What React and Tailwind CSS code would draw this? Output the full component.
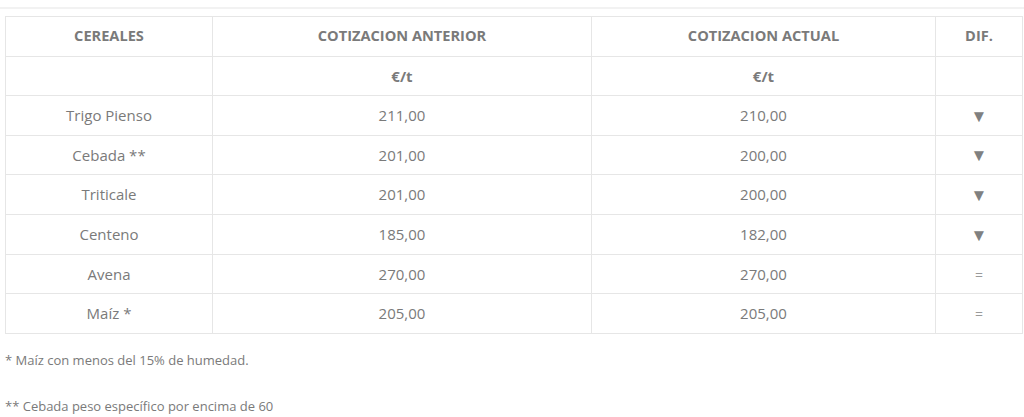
import React from "react";

const ROWS = [
  { nombre: "Trigo Pienso", anterior: "211,00", actual: "210,00", dif: "down" },
  { nombre: "Cebada **", anterior: "201,00", actual: "200,00", dif: "down" },
  { nombre: "Triticale", anterior: "201,00", actual: "200,00", dif: "down" },
  { nombre: "Centeno", anterior: "185,00", actual: "182,00", dif: "down" },
  { nombre: "Avena", anterior: "270,00", actual: "270,00", dif: "eq" },
  { nombre: "Maíz *", anterior: "205,00", actual: "205,00", dif: "eq" },
];

const cell = "border border-[#e6e6e6] h-[39.6px] p-0 text-center align-middle";

export default function App() {
  return (
    <div
      className="w-[1024px] h-[417px] bg-white text-[#7a7a7a] overflow-hidden"
      style={{ fontFamily: '"Open Sans", sans-serif' }}
    >
      <div className="h-[7px]" />
      <div className="h-[2px] bg-[#f2f2f2]" />
      <div className="pl-[5px] pr-[2px] pt-[7px]">
        <table className="w-[1017px] border-collapse table-fixed text-[15px]">
          <colgroup>
            <col className="w-[207px]" />
            <col className="w-[379px]" />
            <col className="w-[344px]" />
            <col className="w-[87px]" />
          </colgroup>
          <thead>
            <tr className="font-bold text-[14.6px]">
              <th className={cell}>CEREALES</th>
              <th className={cell}>COTIZACION ANTERIOR</th>
              <th className={cell}>COTIZACION ACTUAL</th>
              <th className={cell}>DIF.</th>
            </tr>
          </thead>
          <tbody>
            <tr className="font-bold">
              <td className={cell}></td>
              <td className={cell}>€/t</td>
              <td className={cell}>€/t</td>
              <td className={cell}></td>
            </tr>
            {ROWS.map((r) => (
              <tr key={r.nombre}>
                <td className={cell}>{r.nombre}</td>
                <td className={cell}>{r.anterior}</td>
                <td className={cell}>{r.actual}</td>
                <td className={cell}>
                  {r.dif === "down" ? (
                    <span className="text-[#808080] text-[17px]">▼</span>
                  ) : (
                    <span className="text-[#9a9a9a] text-[14px]">=</span>
                  )}
                </td>
              </tr>
            ))}
          </tbody>
        </table>
      </div>
      <p className="text-[13px] pl-[5px] mt-[17px] leading-[18px]">
        * Maíz con menos del 15% de humedad.
      </p>
      <p className="text-[13px] pl-[5px] mt-[28px] leading-[18px]">
        ** Cebada peso específico por encima de 60
      </p>
    </div>
  );
}
